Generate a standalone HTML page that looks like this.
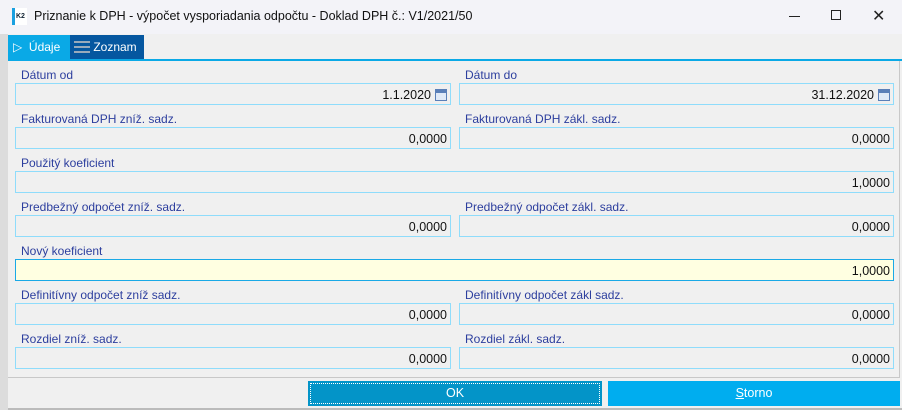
<!DOCTYPE html>
<html><head><meta charset="utf-8"><style>
*{margin:0;padding:0;box-sizing:border-box}
body{width:902px;height:410px;background:#f0f0f0;font-family:"Liberation Sans",sans-serif;position:relative;overflow:hidden}
.a{position:absolute}
.title{left:0;top:0;width:902px;height:34px;background:#f3f3f8}
.lbl{position:absolute;font-size:12px;color:#2c3e9e}
.fld{position:absolute;height:22px;border:1px solid #8fdcfb;background:#f0f0f0;font-size:12.5px;color:#111;text-align:right;padding:4px 3px 0 0;line-height:14px}
.cal{display:inline-block;width:12px;height:12px;border:1px solid #5a7fb8;background:#dfe9f7;margin-left:4px;vertical-align:-2px;position:relative}
.cal:before{content:"";position:absolute;left:0;top:0;right:0;height:3px;background:#5a7fb8}
.btn{position:absolute;top:381px;height:25px;color:#fff;font-size:12.5px;text-align:center;line-height:25px}
</style></head><body>
<div class="a title"></div>
<div class="a" style="left:0;top:34px;width:8px;height:376px;background:#dcdcdc"></div>
<div class="a" style="left:12px;top:8px;width:15px;height:17px;background:#fff;border-left:3px solid #1aa0e0;font-size:7px;font-weight:bold;line-height:17px;padding-left:1px;color:#123">K2</div>
<div class="a" style="left:34px;top:9px;font-size:12.5px;color:#111">Priznanie k DPH - výpočet vysporiadania odpočtu - Doklad DPH č.: V1/2021/50</div>
<div class="a" style="left:789px;top:16px;width:11px;height:1px;background:#222"></div>
<div class="a" style="left:831px;top:10px;width:10px;height:10px;border:1px solid #222"></div>
<div class="a" style="left:872px;top:6px;font-size:16px;color:#222">✕</div>
<div class="a" style="left:8px;top:35px;width:62px;height:25px;background:#0aa9e6;color:#fff;font-size:12px;line-height:24px;padding-left:5px">▷ &nbsp;Údaje</div>
<div class="a" style="left:70px;top:35px;width:74px;height:25px;background:#0557a0;color:#fff;font-size:12px;line-height:24px;padding-left:4px"><span style="display:inline-block;width:16px;height:12px;border-top:2px solid #9ab;border-bottom:2px solid #9ab;vertical-align:-2px;position:relative"><span style="position:absolute;left:0;right:0;top:3px;height:2px;background:#9ab"></span></span> Zoznam</div>
<div class="a" style="left:8px;top:59px;width:894px;height:2px;background:#0aa9e6"></div>
<div class="a" style="left:8px;top:61px;width:892px;height:317px;border-bottom:1px solid #c8c8c8;border-right:1px solid #c8c8c8"></div>

<div class="lbl" style="left:21px;top:68px">Dátum od</div><div class="fld" style="left:15px;top:83px;width:436px">1.1.2020<span class="cal"></span></div>
<div class="lbl" style="left:465px;top:68px">Dátum do</div><div class="fld" style="left:459px;top:83px;width:435px">31.12.2020<span class="cal"></span></div>
<div class="lbl" style="left:21px;top:112px">Fakturovaná DPH zníž. sadz.</div><div class="fld" style="left:15px;top:127px;width:436px">0,0000</div>
<div class="lbl" style="left:465px;top:112px">Fakturovaná DPH zákl. sadz.</div><div class="fld" style="left:459px;top:127px;width:435px">0,0000</div>
<div class="lbl" style="left:21px;top:156px">Použitý koeficient</div><div class="fld" style="left:15px;top:171px;width:879px">1,0000</div>
<div class="lbl" style="left:21px;top:200px">Predbežný odpočet zníž. sadz.</div><div class="fld" style="left:15px;top:215px;width:436px">0,0000</div>
<div class="lbl" style="left:465px;top:200px">Predbežný odpočet zákl. sadz.</div><div class="fld" style="left:459px;top:215px;width:435px">0,0000</div>
<div class="lbl" style="left:21px;top:244px">Nový koeficient</div><div class="fld" style="left:15px;top:259px;width:879px;background:#ffffe1;border-color:#1aa9e6">1,0000</div>
<div class="lbl" style="left:21px;top:288px">Definitívny odpočet zníž sadz.</div><div class="fld" style="left:15px;top:303px;width:436px">0,0000</div>
<div class="lbl" style="left:465px;top:288px">Definitívny odpočet zákl sadz.</div><div class="fld" style="left:459px;top:303px;width:435px">0,0000</div>
<div class="lbl" style="left:21px;top:332px">Rozdiel zníž. sadz.</div><div class="fld" style="left:15px;top:347px;width:436px">0,0000</div>
<div class="lbl" style="left:465px;top:332px">Rozdiel zákl. sadz.</div><div class="fld" style="left:459px;top:347px;width:435px">0,0000</div>

<div class="btn" style="left:308px;width:294px;background:#0394c8;outline:1px dotted #fff;outline-offset:-3px">OK</div>
<div class="btn" style="left:608px;width:292px;background:#00adef"><u>S</u>torno</div>
<div class="a" style="left:8px;top:408px;width:894px;height:2px;background:#bbb"></div>
</body></html>
